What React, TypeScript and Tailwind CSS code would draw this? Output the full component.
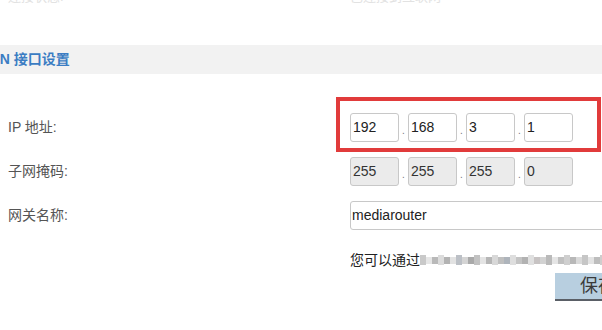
import React from "react";

const font = { fontFamily: '"Liberation Sans", Arial, "Noto Sans CJK SC", sans-serif' };

const mosaic = [
  "#c9c9c9", "#e6e6e6", "#b9b9b9", "#dcdcdc", "#b3b3b3", "#e2e2e2", "#bcc0c6",
  "#d4d4d4", "#a9a9a9", "#c2c2c2", "#e4e4e4", "#b6b6b6", "#d8d8d8", "#bfbfbf",
  "#aeb4bb", "#dedede", "#c4c4c4", "#b2b2b2", "#e0e0e0", "#c7c3c3", "#d2d2d2",
  "#bababa", "#e5e5e5", "#c0c0c0", "#cfcfcf", "#b8b8b8", "#dadada", "#c6c6c6",
  "#e3e3e3", "#bdbdbd", "#d0cccc",
];

function IpBox({ value, disabled }: { value: string; disabled?: boolean }) {
  return (
    <div
      className={
        "w-[49px] h-[29px] border border-[#c8c8c8] rounded-[3px] flex items-center pl-[2px] text-[14px] text-[#222] " +
        (disabled ? "bg-[#ebebeb] text-[#333]" : "bg-white")
      }
    >
      {value}
    </div>
  );
}

function Dot() {
  return <span className="w-[9px] h-[29px] flex items-end justify-center pb-[6px] text-[10px] leading-none text-[#777]">.</span>;
}

function IpGroup({ values, disabled }: { values: string[]; disabled?: boolean }) {
  return (
    <div className="flex">
      {values.map((v, i) => (
        <React.Fragment key={i}>
          {i > 0 && <Dot />}
          <IpBox value={v} disabled={disabled} />
        </React.Fragment>
      ))}
    </div>
  );
}

function Row({ label, children }: { label: string; children: React.ReactNode }) {
  return (
    <div className="flex items-center h-[29px]">
      <div className="w-[350px] shrink-0 pl-[8px] text-[14px] text-[#555]">{label}</div>
      {children}
    </div>
  );
}

export default function App() {
  return (
    <div className="w-[602px] h-[330px] overflow-hidden bg-white relative" style={font}>
      <div className="h-[5px] overflow-hidden flex text-[13px] leading-[14px] text-[#e2e2e2]">
        <span className="-mt-[10px] pl-[8px] w-[350px] shrink-0">连接状态:</span>
        <span className="-mt-[10px]">已连接到互联网</span>
      </div>

      <div className="mt-[40px] h-[29px] bg-[#f2f2f2] flex items-center">
        <span className="-ml-[19px] font-bold text-[14px] text-[#3b7dc3]">LAN 接口设置</span>
      </div>

      <div className="mt-[39px] flex flex-col gap-[15px]">
        <Row label="IP 地址:">
          <div className="relative">
            <IpGroup values={["192", "168", "3", "1"]} />
            <div className="absolute -left-[14px] -top-[16px] w-[265px] h-[55px] border-[4px] border-[#e13b3b]" />
          </div>
        </Row>
        <Row label="子网掩码:">
          <IpGroup values={["255", "255", "255", "0"]} disabled />
        </Row>
        <Row label="网关名称:">
          <div className="w-[300px] h-[29px] border border-[#c8c8c8] rounded-[3px] bg-white flex items-center pl-[1px] text-[14px] text-[#222] shrink-0">
            mediarouter
          </div>
        </Row>
      </div>

      <div className="mt-[20px] ml-[350px] flex items-center h-[20px]">
        <span className="text-[14px] text-[#222] whitespace-nowrap">您可以通过</span>
        <svg width="190" height="12" className="shrink-0">
          {mosaic.map((c, i) => (
            <rect key={i} x={i * 6} y={i % 3 === 0 ? 1 : 3} width="6" height={i % 3 === 0 ? 10 : 7} fill={c} />
          ))}
        </svg>
      </div>

      <div className="mt-[3px] ml-[555px] w-[90px] h-[28px] bg-[#b8cfe0] border-b-[2px] border-[#5a5f66] flex items-center pl-[25px] text-[18px] text-[#3a3a3a] whitespace-nowrap">
        保存
      </div>
    </div>
  );
}
